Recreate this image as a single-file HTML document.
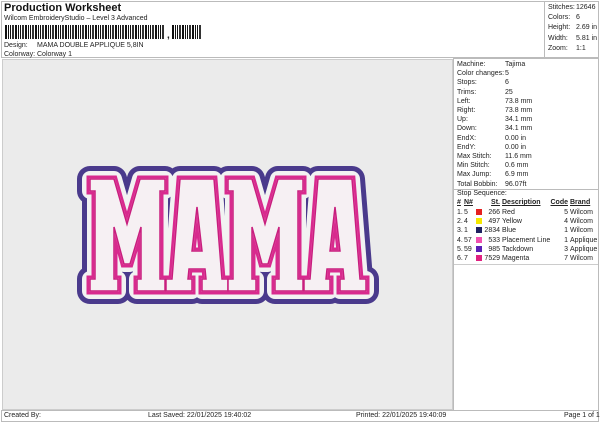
<!DOCTYPE html>
<html><head><meta charset="utf-8"><style>
*{margin:0;padding:0;box-sizing:border-box}
body{width:600px;height:424px;background:#fff;font-family:"Liberation Sans",sans-serif;font-size:7px;color:#222;position:relative;overflow:hidden}
.a{position:absolute;white-space:nowrap}
.r{position:absolute;white-space:nowrap;text-align:right}
.box{position:absolute;border:1px solid #bbb}
.bc{position:absolute;top:25px;height:14px;background:repeating-linear-gradient(90deg,#111 0 2px,#fff 2px 3px,#111 3px 4px,#fff 4px 5px,#111 5px 6px,#fff 6px 7px,#333 7px 9px,#fff 9px 10px)}
.sw{position:absolute;width:6px;height:6px}
.col{line-height:9.2px}
</style></head><body>
<div class="box" style="left:1px;top:1px;width:544px;height:57px"></div>
<div class="box" style="left:544px;top:1px;width:55px;height:57px"></div>
<div class="a" style="left:4px;top:2px;font-size:11px;font-weight:bold;color:#111">Production Worksheet</div>
<div class="a" style="left:4px;top:15px">Wilcom EmbroideryStudio – Level 3 Advanced</div>
<div class="bc" style="left:5px;width:160px"></div>
<div class="a" style="left:167px;top:30px;font-size:10px;font-weight:bold">,</div>
<div class="bc" style="left:172px;width:30px"></div>
<div class="a" style="left:4px;top:42px">Design:</div>
<div class="a" style="left:37px;top:42px">MAMA DOUBLE APPLIQUE 5,8IN</div>
<div class="a" style="left:4px;top:51px">Colorway:</div>
<div class="a" style="left:37px;top:51px">Colorway 1</div>
<div class="a" style="left:548px;top:3px;line-height:10.2px">Stitches:<br>Colors:<br>Height:<br>Width:<br>Zoom:</div>
<div class="a" style="left:576px;top:3px;line-height:10.2px">12646<br>6<br>2.69 in<br>5.81 in<br>1:1</div>

<div style="position:absolute;left:2px;top:59px;width:451px;height:351px;background:#ebebeb;border:1px solid #ccc"></div>
<div class="box" style="left:453px;top:58px;width:146px;height:353px"></div>
<svg style="position:absolute;left:0;top:0" width="460" height="410">
<defs>
<path id="M" d="M0,0 L24,0 L37,45 L50,0 L75,0 L75,12 L70,12 L70,100 L75,100 L75,112 L47,112 L47,100 L51,100 L51,48 L40,85 L34,85 L24,48 L24,100 L28,100 L28,112 L0,112 L0,100 L5,100 L5,12 L0,12 Z"/>
<path id="A" d="M14,0 L48,0 L56,100 L62,100 L62,112 L36,112 L36,100 L40,100 L39,90 L23,90 L22,100 L26,100 L26,112 L0,112 L0,100 L6,100 Z M31,28 L26,72 L36,72 Z"/>
<g id="word">
<use href="#M" x="90" y="179"/>
<use href="#A" x="166" y="179"/>
<use href="#M" x="228" y="179"/>
<use href="#A" x="304" y="179"/>
</g>
</defs>
<use href="#word" fill="#4a3a8c" stroke="#4a3a8c" stroke-width="26" stroke-linejoin="round"/>
<use href="#word" fill="#f2f2f2" stroke="#f2f2f2" stroke-width="16" stroke-linejoin="round"/>
<use href="#word" fill="#d82a8e" stroke="#d82a8e" stroke-width="7" stroke-linejoin="miter"/>
<use href="#word" fill="none" stroke="#f068b8" stroke-width="2"/>
<use href="#word" fill="#f6f0f3" stroke="#c81f7e" stroke-width="1.5"/>
</svg>

<div class="a col" style="left:457px;top:60px">Machine:<br>Color changes:<br>Stops:<br>Trims:<br>Left:<br>Right:<br>Up:<br>Down:<br>EndX:<br>EndY:<br>Max Stitch:<br>Min Stitch:<br>Max Jump:<br>Total Bobbin:</div>
<div class="a col" style="left:505px;top:60px">Tajima<br>5<br>6<br>25<br>73.8 mm<br>73.8 mm<br>34.1 mm<br>34.1 mm<br>0.00 in<br>0.00 in<br>11.6 mm<br>0.6 mm<br>6.9 mm<br>96.07ft</div>
<div style="position:absolute;left:454px;top:189px;width:144px;border-top:1px solid #bbb"></div>
<div class="a" style="left:457px;top:190px">Stop Sequence:</div>
<div class="a" style="left:457px;top:199px;font-weight:bold;text-decoration:underline">#</div>
<div class="a" style="left:464px;top:199px;font-weight:bold;text-decoration:underline">N#</div>
<div class="r" style="right:100px;top:199px;font-weight:bold;text-decoration:underline">St.</div>
<div class="a" style="left:502px;top:199px;font-weight:bold;text-decoration:underline">Description</div>
<div class="r" style="right:32px;top:199px;font-weight:bold;text-decoration:underline">Code</div>
<div class="a" style="left:570px;top:199px;font-weight:bold;text-decoration:underline">Brand</div>
<div class="a col" style="left:457px;top:208px">1.<br>2.<br>3.<br>4.<br>5.<br>6.</div>
<div class="a col" style="left:464px;top:208px">5<br>4<br>1<br>57<br>59<br>7</div>
<div class="sw" style="left:476px;top:209px;background:#e52020"></div>
<div class="sw" style="left:476px;top:218px;background:#f5e800"></div>
<div class="sw" style="left:476px;top:227px;background:#1e2060"></div>
<div class="sw" style="left:476px;top:237px;background:#f050b0"></div>
<div class="sw" style="left:476px;top:246px;background:#5a1eb4"></div>
<div class="sw" style="left:476px;top:255px;background:#e02080"></div>
<div class="r col" style="right:100px;top:208px">266<br>497<br>2834<br>533<br>985<br>7529</div>
<div class="a col" style="left:502px;top:208px">Red<br>Yellow<br>Blue<br>Placement Line<br>Tackdown<br>Magenta</div>
<div class="r col" style="right:32px;top:208px">5<br>4<br>1<br>1<br>3<br>7</div>
<div class="a col" style="left:570px;top:208px">Wilcom<br>Wilcom<br>Wilcom<br>Applique<br>Applique<br>Wilcom</div>
<div style="position:absolute;left:454px;top:264px;width:144px;border-top:1px solid #ccc"></div>

<div class="box" style="left:1px;top:410px;width:598px;height:12px"></div>
<div class="a" style="left:4px;top:412px">Created By:</div>
<div class="a" style="left:148px;top:412px">Last Saved: 22/01/2025 19:40:02</div>
<div class="a" style="left:356px;top:412px">Printed: 22/01/2025 19:40:09</div>
<div class="a" style="left:564px;top:412px">Page 1 of 1</div>
</body></html>
